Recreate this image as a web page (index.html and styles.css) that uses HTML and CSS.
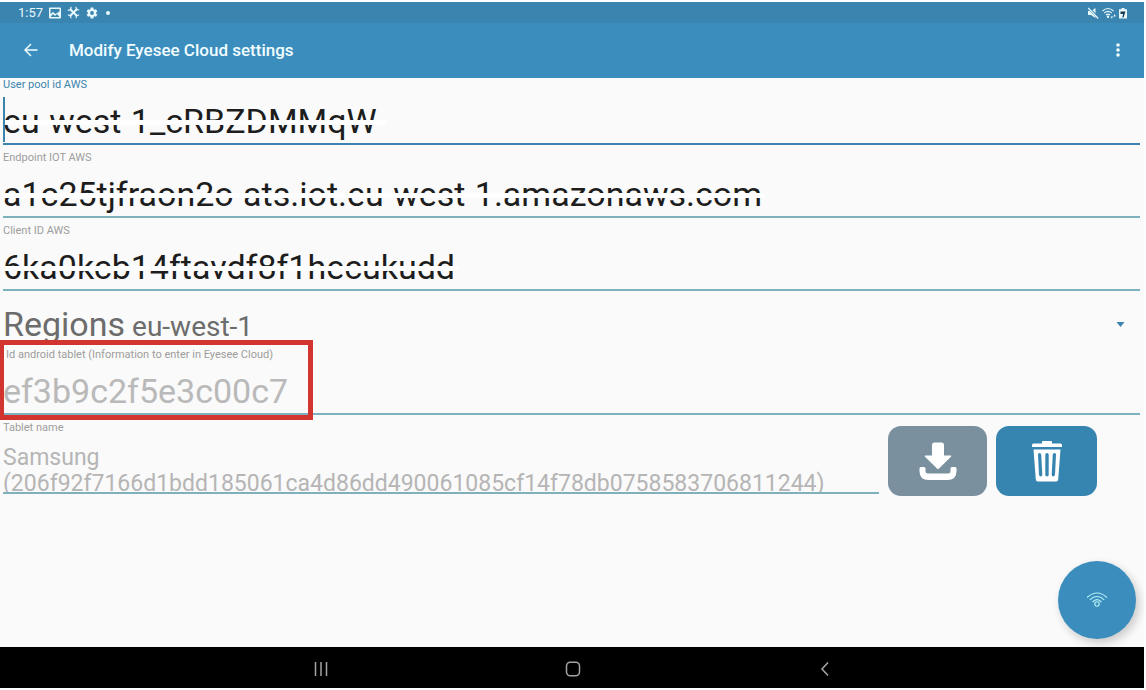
FILE: index.html
```html
<!DOCTYPE html>
<html lang="en">
<head>
<meta charset="utf-8">
<meta name="viewport" content="width=device-width, initial-scale=1">
<title>Modify Eyesee Cloud settings</title>
<link rel="stylesheet" href="styles.css">
</head>
<body>
<div class="status">
  <span class="clock">1:57</span>
  <svg class="status-icon" viewBox="0 0 12 12"><path fill="currentColor" fill-rule="evenodd" d="M1 .5h10q1 0 1 1v9q0 1-1 1H1q-1 0-1-1v-9q0-1 1-1zM1.500 2v5l2.500-2 2.500 2 4-2.500V2zM1.500 10h9L8 7 6 9 4 7z"/></svg>
  <svg class="status-icon status-tools" viewBox="0 0 13 13"><path fill="none" stroke="currentColor" stroke-width="2" d="M3 3l7 7M10 3l-7 7"/><path fill="none" stroke="currentColor" stroke-width="1.200" d="M.8 4Q4 5 4 .8M9 .8Q9 4 12.200 4M.8 9Q4 9 4 12.200M9 12.200Q9 9 12.200 9"/></svg>
  <svg class="status-icon" viewBox="1 1 22 22"><path fill="currentColor" d="M19.400 13a7.500 7.500 0 0 0 0-2l2.400-1.800-2.400-4.100-2.800 1.100-1.700-1L14.500 2h-5l-.4 3.200-1.700 1-2.800-1.100-2.400 4.100L4.600 11a7.500 7.500 0 0 0 0 2l-2.400 1.800 2.400 4.100 2.800-1.100 1.700 1 .4 3.200h5l.4-3.200 1.700-1 2.800 1.100 2.400-4.100zM12 15.500a3.500 3.500 0 1 1 0-7 3.500 3.500 0 0 1 0 7z"/></svg>
  <span class="dot"></span>
  <span class="spacer"></span>
  <span class="status-right">
    <svg class="status-icon" viewBox="0 0 12 12"><path fill="currentColor" d="M1 4h3l4.500-3v10L4 8H1z"/><path stroke="#3a84b0" stroke-width="2.600" d="M1 .5l11 11"/><path stroke="currentColor" stroke-width="1.200" d="M1.200 1l10 10.500"/></svg>
    <svg class="status-wifi" viewBox="0 0 14 12"><g fill="none" stroke="currentColor" stroke-width="1.100"><path d="M.5 4Q6 -1 11.500 4M2.300 6Q6 2.700 9.700 6M4 8q2-1.800 4 0"/></g><circle cx="6" cy="9.800" r="1.200" fill="currentColor"/><path fill="currentColor" d="M8.500 9.500h2.600L9.800 11.800zM11.300 9.500h2.600L12.600 7z"/></svg>
    <svg class="status-battery" viewBox="0 0 8 12"><path fill="currentColor" d="M2.500 1h3v1.200H8V11.500H0V2.200h2.500z"/><path fill="#163a50" d="M1.500 4.500h5L4.500 10.500H3.200L4.200 7H1.500z"/></svg>
  </span>
</div>
<header class="appbar">
  <button class="icon-button" type="button" aria-label="Back"><svg class="back-icon" viewBox="0 0 14 14"><path fill="none" stroke="currentColor" stroke-width="1.500" d="M13.500 7H1M7 1L1 7l6 6"/></svg></button>
  <h1 class="title">Modify Eyesee Cloud settings</h1>
  <button class="icon-button" type="button" aria-label="More options"><svg class="more-icon" viewBox="0 0 4 16"><g fill="currentColor"><circle cx="2" cy="3" r="1.800"/><circle cx="2" cy="8" r="1.800"/><circle cx="2" cy="13" r="1.800"/></g></svg></button>
</header>
<main class="content">
  <div class="field field-active">
    <label class="label" for="pool">User pool id AWS</label>
    <div class="entry"><input class="input" id="pool" type="text" value="eu-west-1_cRBZDMMqW"><span class="caret"></span><span class="mask mask-pool"></span></div>
  </div>
  <div class="field">
    <label class="label" for="endpoint">Endpoint IOT AWS</label>
    <div class="entry"><input class="input" id="endpoint" type="text" value="a1c25tjfraon2o-ats.iot.eu-west-1.amazonaws.com"><span class="mask mask-endpoint"></span></div>
  </div>
  <div class="field">
    <label class="label" for="client">Client ID AWS</label>
    <div class="entry"><input class="input" id="client" type="text" value="6ka0kcb14ftavdf8f1hecukudd"><span class="mask mask-client"></span></div>
  </div>
  <div class="region">
    <label class="region-label" for="region">Regions</label>
    <select class="region-select" id="region"><option>eu-west-1</option></select>
    <svg class="arrow" viewBox="0 0 8 5"><path fill="currentColor" d="M0 0h8L4 5z"/></svg>
  </div>
  <div class="field field-id">
    <label class="label label-id" for="tablet-id">Id android tablet (Information to enter in Eyesee Cloud)</label>
    <div class="entry"><input class="input" id="tablet-id" type="text" value="ef3b9c2f5e3c00c7" disabled></div>
    <span class="highlight"></span>
  </div>
  <div class="tablet">
    <div class="tablet-name">
      <label class="label" for="name">Tablet name</label>
      <textarea class="textarea" id="name" disabled>Samsung
(206f92f7166d1bdd185061ca4d86dd490061085cf14f78db0758583706811244)</textarea>
    </div>
    <button class="action action-download" type="button" aria-label="Download"><svg class="action-icon" viewBox="0 0 40 42"><path fill="#fff" d="M16.500 2.500h7q2.500 0 2.500 2.500V15.500h6.500q1.500 0 .5 1.200L21 28.500q-1 1-2 0L7 16.700q-1-1.200.5-1.200H14V5q0-2.500 2.500-2.500z"/><path fill="#fff" d="M3 27h3q1.500 0 1.500 1.500V31q0 2.500 2.500 2.500h20q2.500 0 2.500-2.500v-2.500q0-1.500 1.500-1.500h3q1.500 0 1.500 1.500V31q0 9-9 9H10.500q-9 0-9-9v-2.500Q1.500 27 3 27z"/></svg></button>
    <button class="action action-delete" type="button" aria-label="Delete"><svg class="action-icon" viewBox="0 0 40 42"><path fill="#fff" d="M6.500 3.500H15V2q0-1 1-1h8q1 0 1 1v1.500h8.500q1.500 0 1.500 1.500v2H5V5q0-1.500 1.500-1.500z"/><path fill="#fff" fill-rule="evenodd" d="M6.500 9.500h27L31.200 39.500q-.2 2-2 2H10.800q-1.800 0-2-2zM12.500 13q-1.500 0-1.500 1.500l1 20q.2 2 1.800 2t1.500-2l-1.100-20Q14 13 12.500 13zM20 13q-1.700 0-1.700 1.700v20q0 1.800 1.700 1.800t1.700-1.800v-20Q21.700 13 20 13zM27.500 13q-1.500 0-1.700 1.500l-1.100 20q0 2 1.500 2t1.800-2l1-20Q29 13 27.500 13z"/></svg></button>
  </div>
  <button class="fab" type="button" aria-label="Wi-Fi"><svg class="fab-icon" viewBox="0 0 22 16"><g fill="none" stroke="currentColor" stroke-width="1.100"><path d="M1 5.500Q11 -3.500 21 5.500M3.800 7.800Q11 1.200 18.200 7.800M6.500 10Q11 5.200 15.500 10"/><circle cx="11" cy="12" r="2.200"/></g></svg></button>
</main>
<nav class="navbar">
  <button class="nav-button" type="button" aria-label="Recent apps"><svg class="nav-icon" viewBox="0 0 16 16"><path stroke="currentColor" stroke-width="1.500" d="M2.500 1v14M8 1v14M13.500 1v14"/></svg></button>
  <button class="nav-button" type="button" aria-label="Home"><svg class="nav-icon" viewBox="0 0 16 16"><rect x="1.500" y="1.200" width="13" height="13.600" rx="3.800" fill="none" stroke="currentColor" stroke-width="1.500"/></svg></button>
  <button class="nav-button" type="button" aria-label="Back"><svg class="nav-icon" viewBox="0 0 16 16"><path fill="none" stroke="currentColor" stroke-width="1.600" d="M11 1.500L5 8l6 6.500"/></svg></button>
</nav>
</body>
</html>
```
FILE: styles.css
```css
* { box-sizing: border-box; }
body {
  margin: 0;
  padding: 2px 2px 2px 0;
  min-height: 100vh;
  display: flex;
  flex-direction: column;
  background: #fff;
  font-family: Roboto, "Liberation Sans", sans-serif;
  color: #1d1d1d;
}
button, input, select, textarea { font-family: inherit; margin: 0; }
button { padding: 0; border: 0; background: none; color: inherit; }
svg { display: block; }

.status {
  display: flex;
  align-items: center;
  gap: 6px;
  height: 21px;
  padding: 0 17px 0 18px;
  background: #3a84b0;
  color: #e8f8fb;
}
.clock { font-size: 13px; line-height: 21px; }
.status-icon { width: 12px; height: 12px; }
.status-tools { width: 13px; height: 13px; }
.status-wifi { width: 14px; height: 12px; }
.status-battery { width: 8px; height: 12px; }
.status-right { display: flex; gap: 3px; }
.dot { width: 4px; height: 4px; margin-left: 2px; border-radius: 50%; background: currentColor; }
.spacer { flex: 1; }

.appbar {
  display: flex;
  align-items: center;
  height: 55px;
  padding: 0 10px 2px 15px;
  background: #3b8dbd;
  color: #f1fdff;
}
.icon-button { display: grid; place-items: center; width: 32px; height: 32px; }
.back-icon { width: 14px; height: 14px; }
.more-icon { width: 4px; height: 16px; }
.title { flex: 1; margin: 0; padding-left: 22px; font-size: 17px; line-height: 24px; font-weight: 500; }

.content { position: relative; flex: 1; background: #fafafa; padding: 0 4px 0 3px; }
.field { position: relative; padding-bottom: 6px; }
.label { display: block; font-size: 11px; line-height: 14px; color: #9d9d9d; }
.label-id { padding-left: 3px; }
.field-active .label { color: #3a84ad; }
.entry { position: relative; }
.input {
  display: block;
  width: 100%;
  height: 53px;
  padding: 6px 0 0;
  border: 0;
  border-bottom: 2px solid #7fb0be;
  outline: 0;
  background: none;
  font-size: 34px;
  color: #1d1d1d;
}
.field-active .input { border-bottom-color: #3a84ad; }
.input:disabled { color: #b9b9b9; }
.caret { position: absolute; left: 0; top: 5px; width: 2px; height: 45px; background: #3a84ad; }
.mask { position: absolute; left: 2px; top: 28px; height: 5px; background: #fefefe; }
.mask-pool { width: 382px; }
.mask-endpoint { width: 760px; }
.mask-client { width: 454px; }

.region { display: flex; align-items: baseline; height: 51px; padding: 7px 15px 0 0; color: #6c6c6c; }
.region-label { font-size: 34px; line-height: 40px; }
.region-select {
  flex: 1;
  padding: 0 0 0 7px;
  border: 0;
  appearance: none;
  background: none;
  font-size: 28px;
  line-height: 34px;
  color: inherit;
}
.arrow { align-self: center; width: 9px; height: 5px; margin-bottom: 4px; color: #3a84ad; }
.highlight { position: absolute; left: -3px; top: -8px; width: 313px; height: 80px; border: 5px solid #d23430; border-left-width: 4px; }

.tablet { display: flex; gap: 9px; padding-right: 43px; }
.tablet-name { flex: 1; }
.textarea {
  display: block;
  width: 100%;
  height: 59px;
  padding: 10px 0 0;
  border: 0;
  border-bottom: 2px solid #7fb0be;
  overflow: hidden;
  resize: none;
  background: none;
  font-size: 23px;
  line-height: 26px;
  color: #b5b5b5;
}
.action { display: grid; place-items: center; height: 70px; margin-top: 5px; border-radius: 13px; }
.action-download { width: 99px; background: #7b909e; }
.action-delete { width: 101px; background: #3684b0; }
.action-icon { width: 40px; height: 42px; }

.fab {
  position: absolute;
  right: 8px;
  bottom: 8px;
  display: grid;
  place-items: center;
  width: 78px;
  height: 78px;
  border-radius: 50%;
  background: #3a8dbc;
  color: #b9f3f8;
  box-shadow: 3px 4px 10px rgba(0, 0, 0, 0.2);
}
.fab-icon { width: 22px; height: 16px; }

.navbar { display: flex; justify-content: center; align-items: center; gap: 212px; height: 41px; padding: 2px 0 0 2px; background: #000; color: #a3a3a3; }
.nav-button { display: grid; place-items: center; width: 40px; height: 39px; }
.nav-icon { width: 16px; height: 16px; }
```
